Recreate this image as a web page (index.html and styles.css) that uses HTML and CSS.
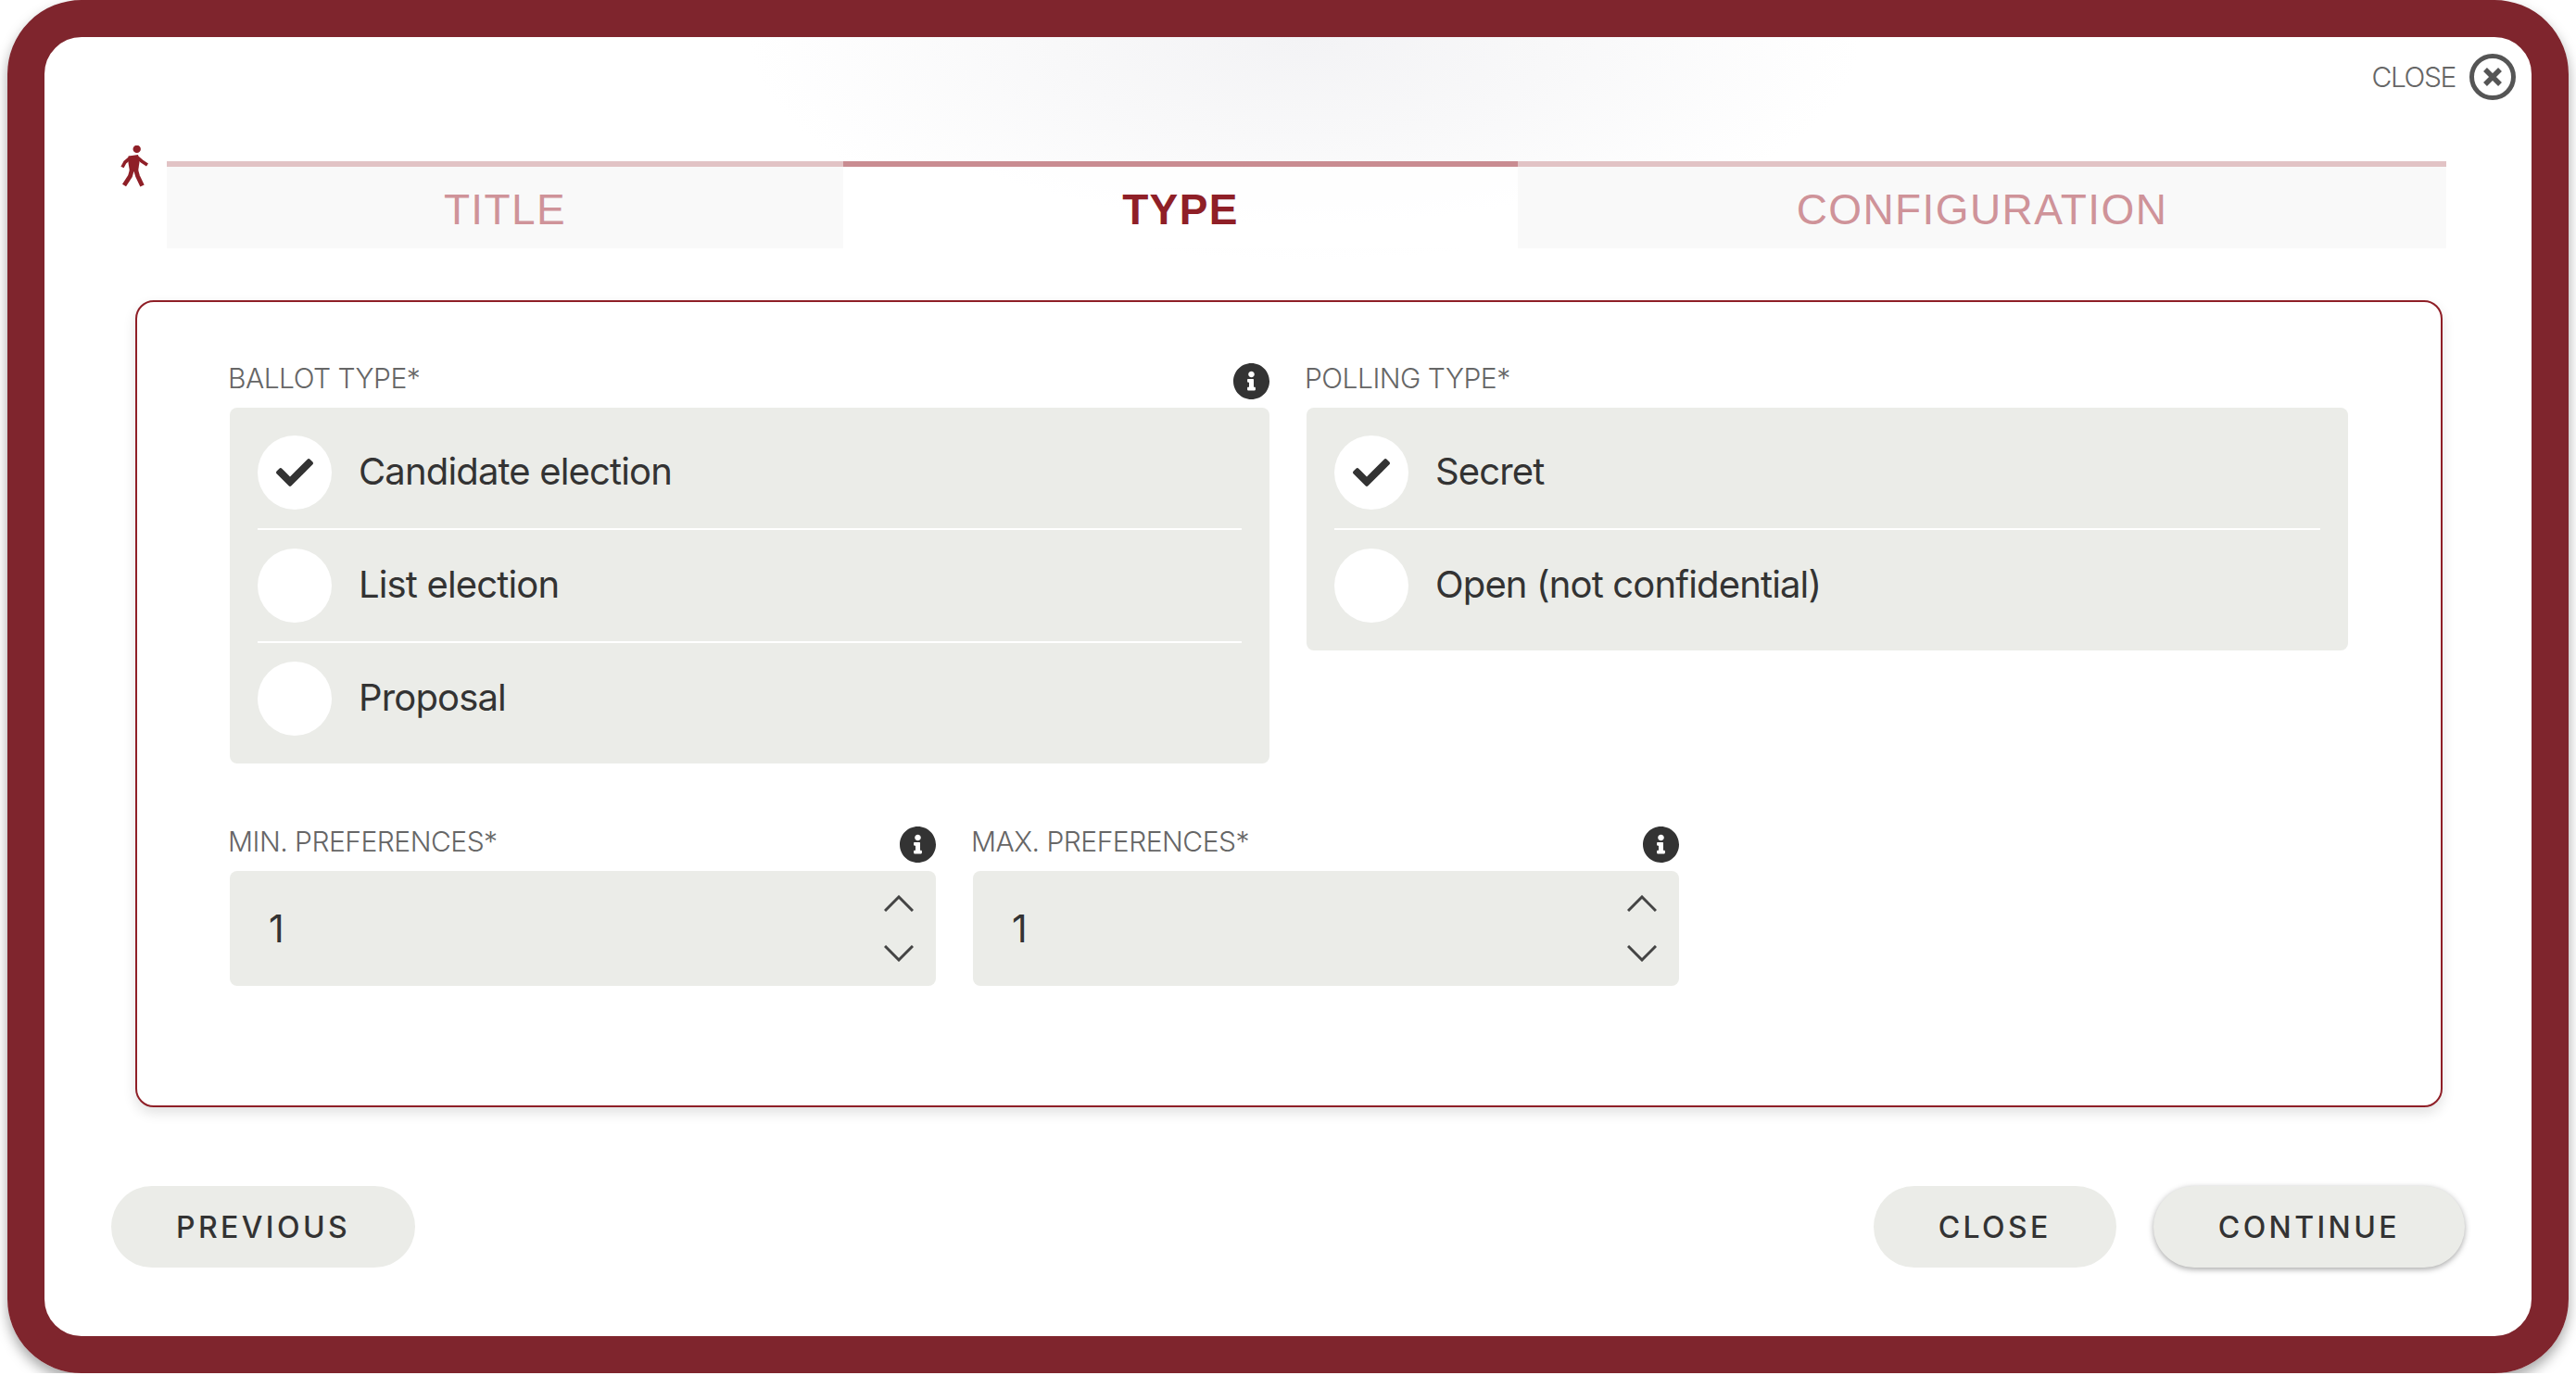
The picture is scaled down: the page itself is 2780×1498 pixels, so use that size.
FILE: index.html
```html
<!DOCTYPE html>
<html lang="en">
<head>
  <meta charset="UTF-8" />
  <title>New voting</title>
  <link rel="stylesheet" href="styles.css">
</head>
<body>
  <div class="dialog">
    <div class="dialog-top">
      <span class="close-text">CLOSE</span>
      <svg class="close-icon" viewBox="0 0 50 50">
        <circle cx="25" cy="25" r="22.5" fill="none" stroke="#555" stroke-width="5"/>
        <path d="M17 17l16 16M33 17L17 33" fill="none" stroke="#555" stroke-width="5.5"/>
      </svg>
    </div>

    <div class="stepper">
      <svg class="walk-icon" viewBox="0 0 30 45">
        <circle cx="17.7" cy="3.9" r="4.2"/>
        <path d="M8.5 11.5l10.5-1.5 1.5 8-1.5 10h-9l-1.5-9z"/>
        <path class="limb" d="M11 13l-6 5-3 5.5M17 12l6 5 6 4"/>
        <path class="limb thick" d="M12.5 26l-2 7-6.5 10M16.5 26l2 7 5 10.5"/>
      </svg>
      <div class="tabs">
        <div class="tab">TITLE</div>
        <div class="tab active">TYPE</div>
        <div class="tab">CONFIGURATION</div>
      </div>
    </div>

    <div class="panel">
      <div class="type-row">
        <div class="field">
          <div class="field-head">
            <span class="field-label">BALLOT TYPE*</span>
            <svg class="info-icon" viewBox="8 8 496 496"><path d="M256 8C119.043 8 8 119.083 8 256c0 136.997 111.043 248 248 248s248-111.003 248-248C504 119.083 392.957 8 256 8zm0 110c23.196 0 42 18.804 42 42s-18.804 42-42 42-42-18.804-42-42 18.804-42 42-42zm56 254c0 6.627-5.373 12-12 12h-88c-6.627 0-12-5.373-12-12v-24c0-6.627 5.373-12 12-12h12v-64h-12c-6.627 0-12-5.373-12-12v-24c0-6.627 5.373-12 12-12h64c6.627 0 12 5.373 12 12v100h12c6.627 0 12 5.373 12 12v24z"/></svg>
          </div>
          <div class="options">
            <div class="option">
              <span class="radio"><svg class="check" viewBox="0 64 512 384"><path d="M173.898 439.404l-166.4-166.4c-9.997-9.997-9.997-26.206 0-36.204l36.203-36.204c9.997-9.998 26.207-9.998 36.204 0L192 312.69 432.095 72.596c9.997-9.997 26.207-9.997 36.204 0l36.203 36.204c9.997 9.997 9.997 26.206 0 36.204l-294.4 294.401c-9.998 9.997-26.207 9.997-36.204-.001z"/></svg></span>
              <span class="option-text">Candidate election</span>
            </div>
            <div class="option">
              <span class="radio"></span>
              <span class="option-text">List election</span>
            </div>
            <div class="option">
              <span class="radio"></span>
              <span class="option-text">Proposal</span>
            </div>
          </div>
        </div>

        <div class="field">
          <div class="field-head">
            <span class="field-label">POLLING TYPE*</span>
          </div>
          <div class="options">
            <div class="option">
              <span class="radio"><svg class="check" viewBox="0 64 512 384"><path d="M173.898 439.404l-166.4-166.4c-9.997-9.997-9.997-26.206 0-36.204l36.203-36.204c9.997-9.998 26.207-9.998 36.204 0L192 312.69 432.095 72.596c9.997-9.997 26.207-9.997 36.204 0l36.203 36.204c9.997 9.997 9.997 26.206 0 36.204l-294.4 294.401c-9.998 9.997-26.207 9.997-36.204-.001z"/></svg></span>
              <span class="option-text">Secret</span>
            </div>
            <div class="option">
              <span class="radio"></span>
              <span class="option-text">Open (not confidential)</span>
            </div>
          </div>
        </div>
      </div>

      <div class="pref-row">
        <div class="field pref">
          <div class="field-head">
            <span class="field-label">MIN. PREFERENCES*</span>
            <svg class="info-icon" viewBox="8 8 496 496"><path d="M256 8C119.043 8 8 119.083 8 256c0 136.997 111.043 248 248 248s248-111.003 248-248C504 119.083 392.957 8 256 8zm0 110c23.196 0 42 18.804 42 42s-18.804 42-42 42-42-18.804-42-42 18.804-42 42-42zm56 254c0 6.627-5.373 12-12 12h-88c-6.627 0-12-5.373-12-12v-24c0-6.627 5.373-12 12-12h12v-64h-12c-6.627 0-12-5.373-12-12v-24c0-6.627 5.373-12 12-12h64c6.627 0 12 5.373 12 12v100h12c6.627 0 12 5.373 12 12v24z"/></svg>
          </div>
          <div class="number-input">
            <span>1</span>
            <div class="spinner">
              <svg viewBox="0 0 32 18"><path d="M1 17L16 2l15 15"/></svg>
              <svg viewBox="0 0 32 18"><path d="M1 1l15 15L31 1"/></svg>
            </div>
          </div>
        </div>

        <div class="field pref">
          <div class="field-head">
            <span class="field-label">MAX. PREFERENCES*</span>
            <svg class="info-icon" viewBox="8 8 496 496"><path d="M256 8C119.043 8 8 119.083 8 256c0 136.997 111.043 248 248 248s248-111.003 248-248C504 119.083 392.957 8 256 8zm0 110c23.196 0 42 18.804 42 42s-18.804 42-42 42-42-18.804-42-42 18.804-42 42-42zm56 254c0 6.627-5.373 12-12 12h-88c-6.627 0-12-5.373-12-12v-24c0-6.627 5.373-12 12-12h12v-64h-12c-6.627 0-12-5.373-12-12v-24c0-6.627 5.373-12 12-12h64c6.627 0 12 5.373 12 12v100h12c6.627 0 12 5.373 12 12v24z"/></svg>
          </div>
          <div class="number-input">
            <span>1</span>
            <div class="spinner">
              <svg viewBox="0 0 32 18"><path d="M1 17L16 2l15 15"/></svg>
              <svg viewBox="0 0 32 18"><path d="M1 1l15 15L31 1"/></svg>
            </div>
          </div>
        </div>
      </div>
    </div>

    <div class="actions">
      <button class="btn">PREVIOUS</button>
      <div class="actions-right">
        <button class="btn">CLOSE</button>
        <button class="btn raised">CONTINUE</button>
      </div>
    </div>
  </div>
</body>
</html>
```

FILE: styles.css
```css
:root {
  --wine: #7f252d;
  --red: #8f1f27;
  --field-bg: #ebece8;
  --text-dark: #333333;
  --text-label: #666666;
}

body {
  margin: 0;
  padding: 0 8px;
  background: white;
  font-family: Inter, sans-serif;
  color: var(--text-dark);
}

.dialog {
  box-sizing: border-box;
  height: 1482px;
  border: 40px solid var(--wine);
  border-radius: 80px;
  background: radial-gradient(ellipse 600px 240px at 1360px 0, #f3f3f5, #f8f8f9 45%, white);
  box-shadow: 0 7px 14px rgba(0, 0, 0, 0.35);
}

.dialog-top {
  display: flex;
  justify-content: flex-end;
  align-items: center;
  gap: 15px;
  padding: 18px 17px 0 0;
}

.close-text {
  font-size: 30px;
  font-weight: 300;
  letter-spacing: -1.4px;
  color: var(--text-label);
}

.close-icon {
  width: 50px;
  height: 50px;
}

.stepper {
  display: flex;
  margin: 66px 92px 0 82px;
}

.walk-icon {
  flex: none;
  width: 30px;
  height: 45px;
  margin: -17px 20px 0 0;
  fill: var(--red);
}

.limb {
  fill: none;
  stroke: var(--red);
  stroke-width: 3.6;
}

.limb.thick {
  stroke-width: 4.8;
}

.tabs {
  flex: 1;
  display: grid;
  grid-template-columns: 730px 728px 1fr;
}

.tab {
  height: 88px;
  border-top: 6px solid #e2c3c5;
  background: #f9f9f9;
  color: #cf9399;
  font-family: "Liberation Sans", sans-serif;
  font-size: 46px;
  letter-spacing: 1.4px;
  line-height: 92px;
  text-align: center;
}

.tab.active {
  border-top-color: #c98c91;
  background: rgba(255, 255, 255, 0.7);
  color: var(--red);
  font-weight: 700;
}

.panel {
  box-sizing: border-box;
  height: 871px;
  margin: 56px 96px 0 98px;
  padding: 66px 100px 0;
  border: 2px solid var(--red);
  border-radius: 20px;
  background: white;
  box-shadow: 0 6px 14px rgba(0, 0, 0, 0.12);
}

.type-row {
  display: grid;
  grid-template-columns: 1122px 1124px;
  gap: 40px;
  align-items: start;
}

.pref-row {
  display: flex;
  gap: 40px;
  margin-top: 68px;
}

.pref {
  width: 762px;
}

.field-head {
  display: flex;
  justify-content: space-between;
  height: 48px;
}

.field-label {
  margin-left: -2px;
  font-size: 30px;
  font-weight: 300;
  line-height: 32px;
  letter-spacing: -0.5px;
  color: var(--text-label);
}

.info-icon {
  width: 39px;
  height: 39px;
  fill: var(--text-dark);
}

.options {
  padding: 30px;
  border-radius: 8px;
  background: var(--field-bg);
}

.option {
  display: flex;
  align-items: center;
  gap: 29px;
  font-size: 40px;
  letter-spacing: -0.85px;
}

.option-text {
  margin-top: -3px;
}

.option + .option {
  margin-top: 20px;
  padding-top: 20px;
  border-top: 2px solid white;
}

.radio {
  display: flex;
  justify-content: center;
  align-items: center;
  width: 80px;
  height: 80px;
  border-radius: 50%;
  background: white;
}

.check {
  width: 40px;
  height: 30px;
  fill: var(--text-dark);
}

.number-input {
  box-sizing: border-box;
  display: flex;
  justify-content: space-between;
  align-items: center;
  height: 124px;
  padding: 0 24px 0 42px;
  border-radius: 8px;
  background: var(--field-bg);
  font-size: 41px;
}

.spinner {
  display: flex;
  flex-direction: column;
  gap: 36px;
}

.spinner svg {
  display: block;
  width: 32px;
  height: 18px;
  fill: none;
  stroke: #444;
  stroke-width: 3;
}

.actions {
  display: flex;
  justify-content: space-between;
  margin: 85px 72px 0;
}

.actions-right {
  display: flex;
  gap: 40px;
}

.btn {
  height: 88px;
  padding: 0 70px;
  border: none;
  border-radius: 44px;
  background: var(--field-bg);
  color: var(--text-dark);
  font-family: Inter, sans-serif;
  font-size: 32px;
  font-weight: 500;
  letter-spacing: 3.4px;
}

.btn.raised {
  box-shadow: 0 2px 6px rgba(0, 0, 0, 0.35);
}
```
